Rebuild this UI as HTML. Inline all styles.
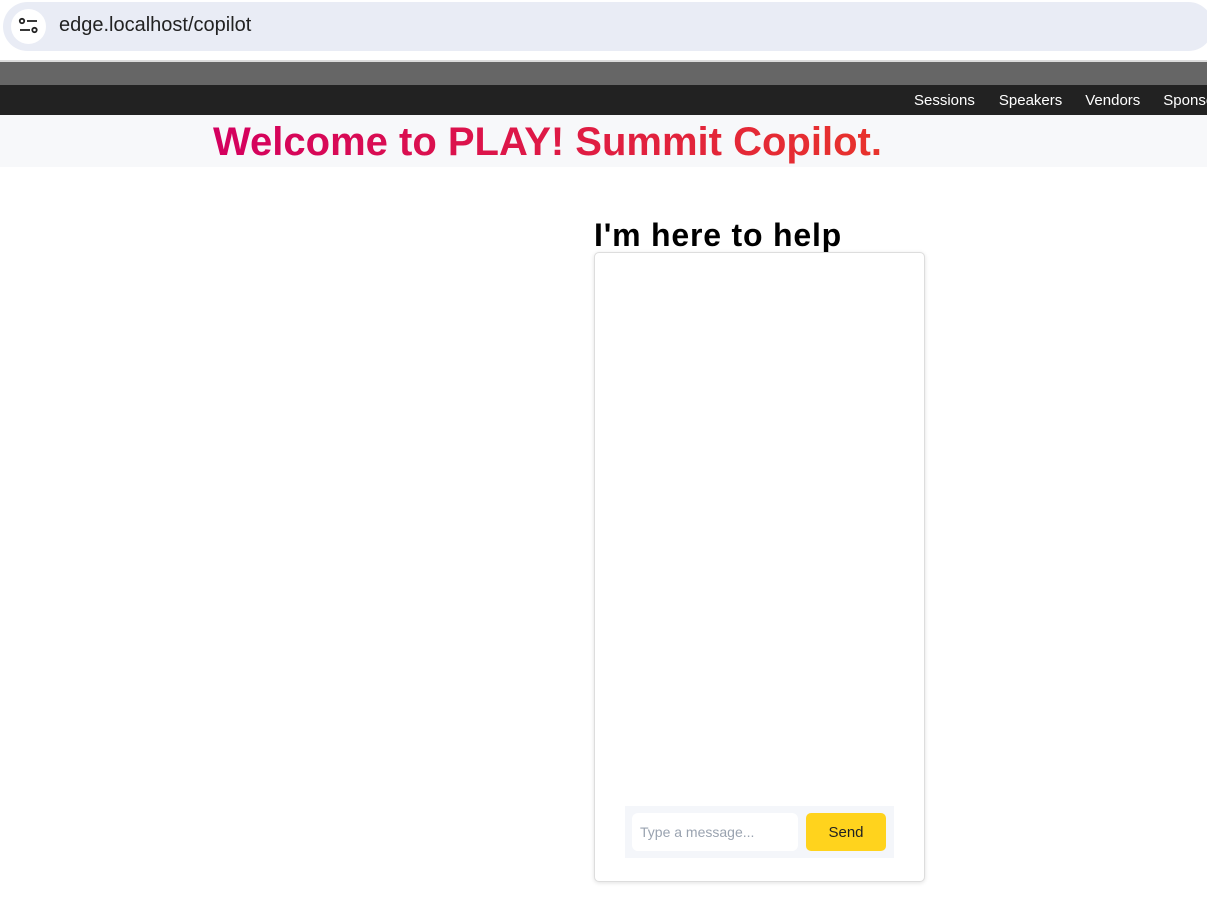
<!DOCTYPE html>
<html><head><style>
*{margin:0;padding:0;box-sizing:border-box}
body{width:1207px;height:901px;overflow:hidden;background:#fff;font-family:"Liberation Sans",sans-serif;position:relative}
.abs{position:absolute}
</style></head><body>
<div class="abs" style="left:0;top:0;width:1207px;height:60px;background:#fff"></div>
<div class="abs" style="left:3px;top:2px;width:1210px;height:49px;background:#e9ecf5;border-radius:25px"></div>
<div class="abs" style="left:11px;top:9px;width:35px;height:35px;background:#fff;border-radius:50%"></div>
<svg class="abs" style="left:18px;top:16px" width="22" height="22" viewBox="0 0 22 22"><circle cx="4" cy="5" r="2.2" fill="none" stroke="#222" stroke-width="1.8"/><line x1="9" y1="5" x2="19" y2="5" stroke="#222" stroke-width="1.8"/><line x1="2" y1="14" x2="12" y2="14" stroke="#222" stroke-width="1.8"/><circle cx="16.5" cy="14" r="2.2" fill="none" stroke="#222" stroke-width="1.8"/></svg>
<div class="abs" style="left:59px;top:14px;font-size:20px;color:#222">edge.localhost/copilot</div>
<div class="abs" style="left:0;top:60px;width:1207px;height:2px;background:#dcdcdc"></div>
<div class="abs" style="left:0;top:62px;width:1207px;height:23px;background:#666"></div>
<div class="abs" style="left:0;top:85px;width:1207px;height:30px;background:#222"></div>
<div class="abs" style="left:914px;top:92px;font-size:15px;color:#fff;white-space:nowrap">Sessions<span style="margin-left:24px">Speakers</span><span style="margin-left:23px">Vendors</span><span style="margin-left:23px">Sponsors</span></div>
<div class="abs" style="left:0;top:115px;width:1207px;height:52px;background:#f7f8fa"></div>
<div class="abs" style="left:213px;top:120px;font-size:40px;font-weight:bold;white-space:nowrap;background:linear-gradient(90deg,#d4005f,#e8332c);-webkit-background-clip:text;color:transparent;letter-spacing:0px">Welcome to PLAY! Summit Copilot.</div>
<div class="abs" style="left:594px;top:217px;font-size:32px;font-weight:bold;color:#000;white-space:nowrap;letter-spacing:0.8px">I'm here to help</div>
<div class="abs" style="left:594px;top:252px;width:331px;height:630px;border:1px solid #ddd;border-radius:5px;box-shadow:0 1px 4px rgba(0,0,0,.12);background:#fff"></div>
<div class="abs" style="left:625px;top:806px;width:269px;height:52px;background:#f4f6fa"></div>
<div class="abs" style="left:632px;top:813px;width:166px;height:38px;background:#fff;border-radius:6px"></div>
<div class="abs" style="left:640px;top:824px;font-size:14px;color:#9aa3b0">Type a message...</div>
<div class="abs" style="left:806px;top:813px;width:80px;height:38px;background:#ffd31d;border-radius:5px;font-size:15px;color:#222;text-align:center;line-height:39px">Send</div>
</body></html>
